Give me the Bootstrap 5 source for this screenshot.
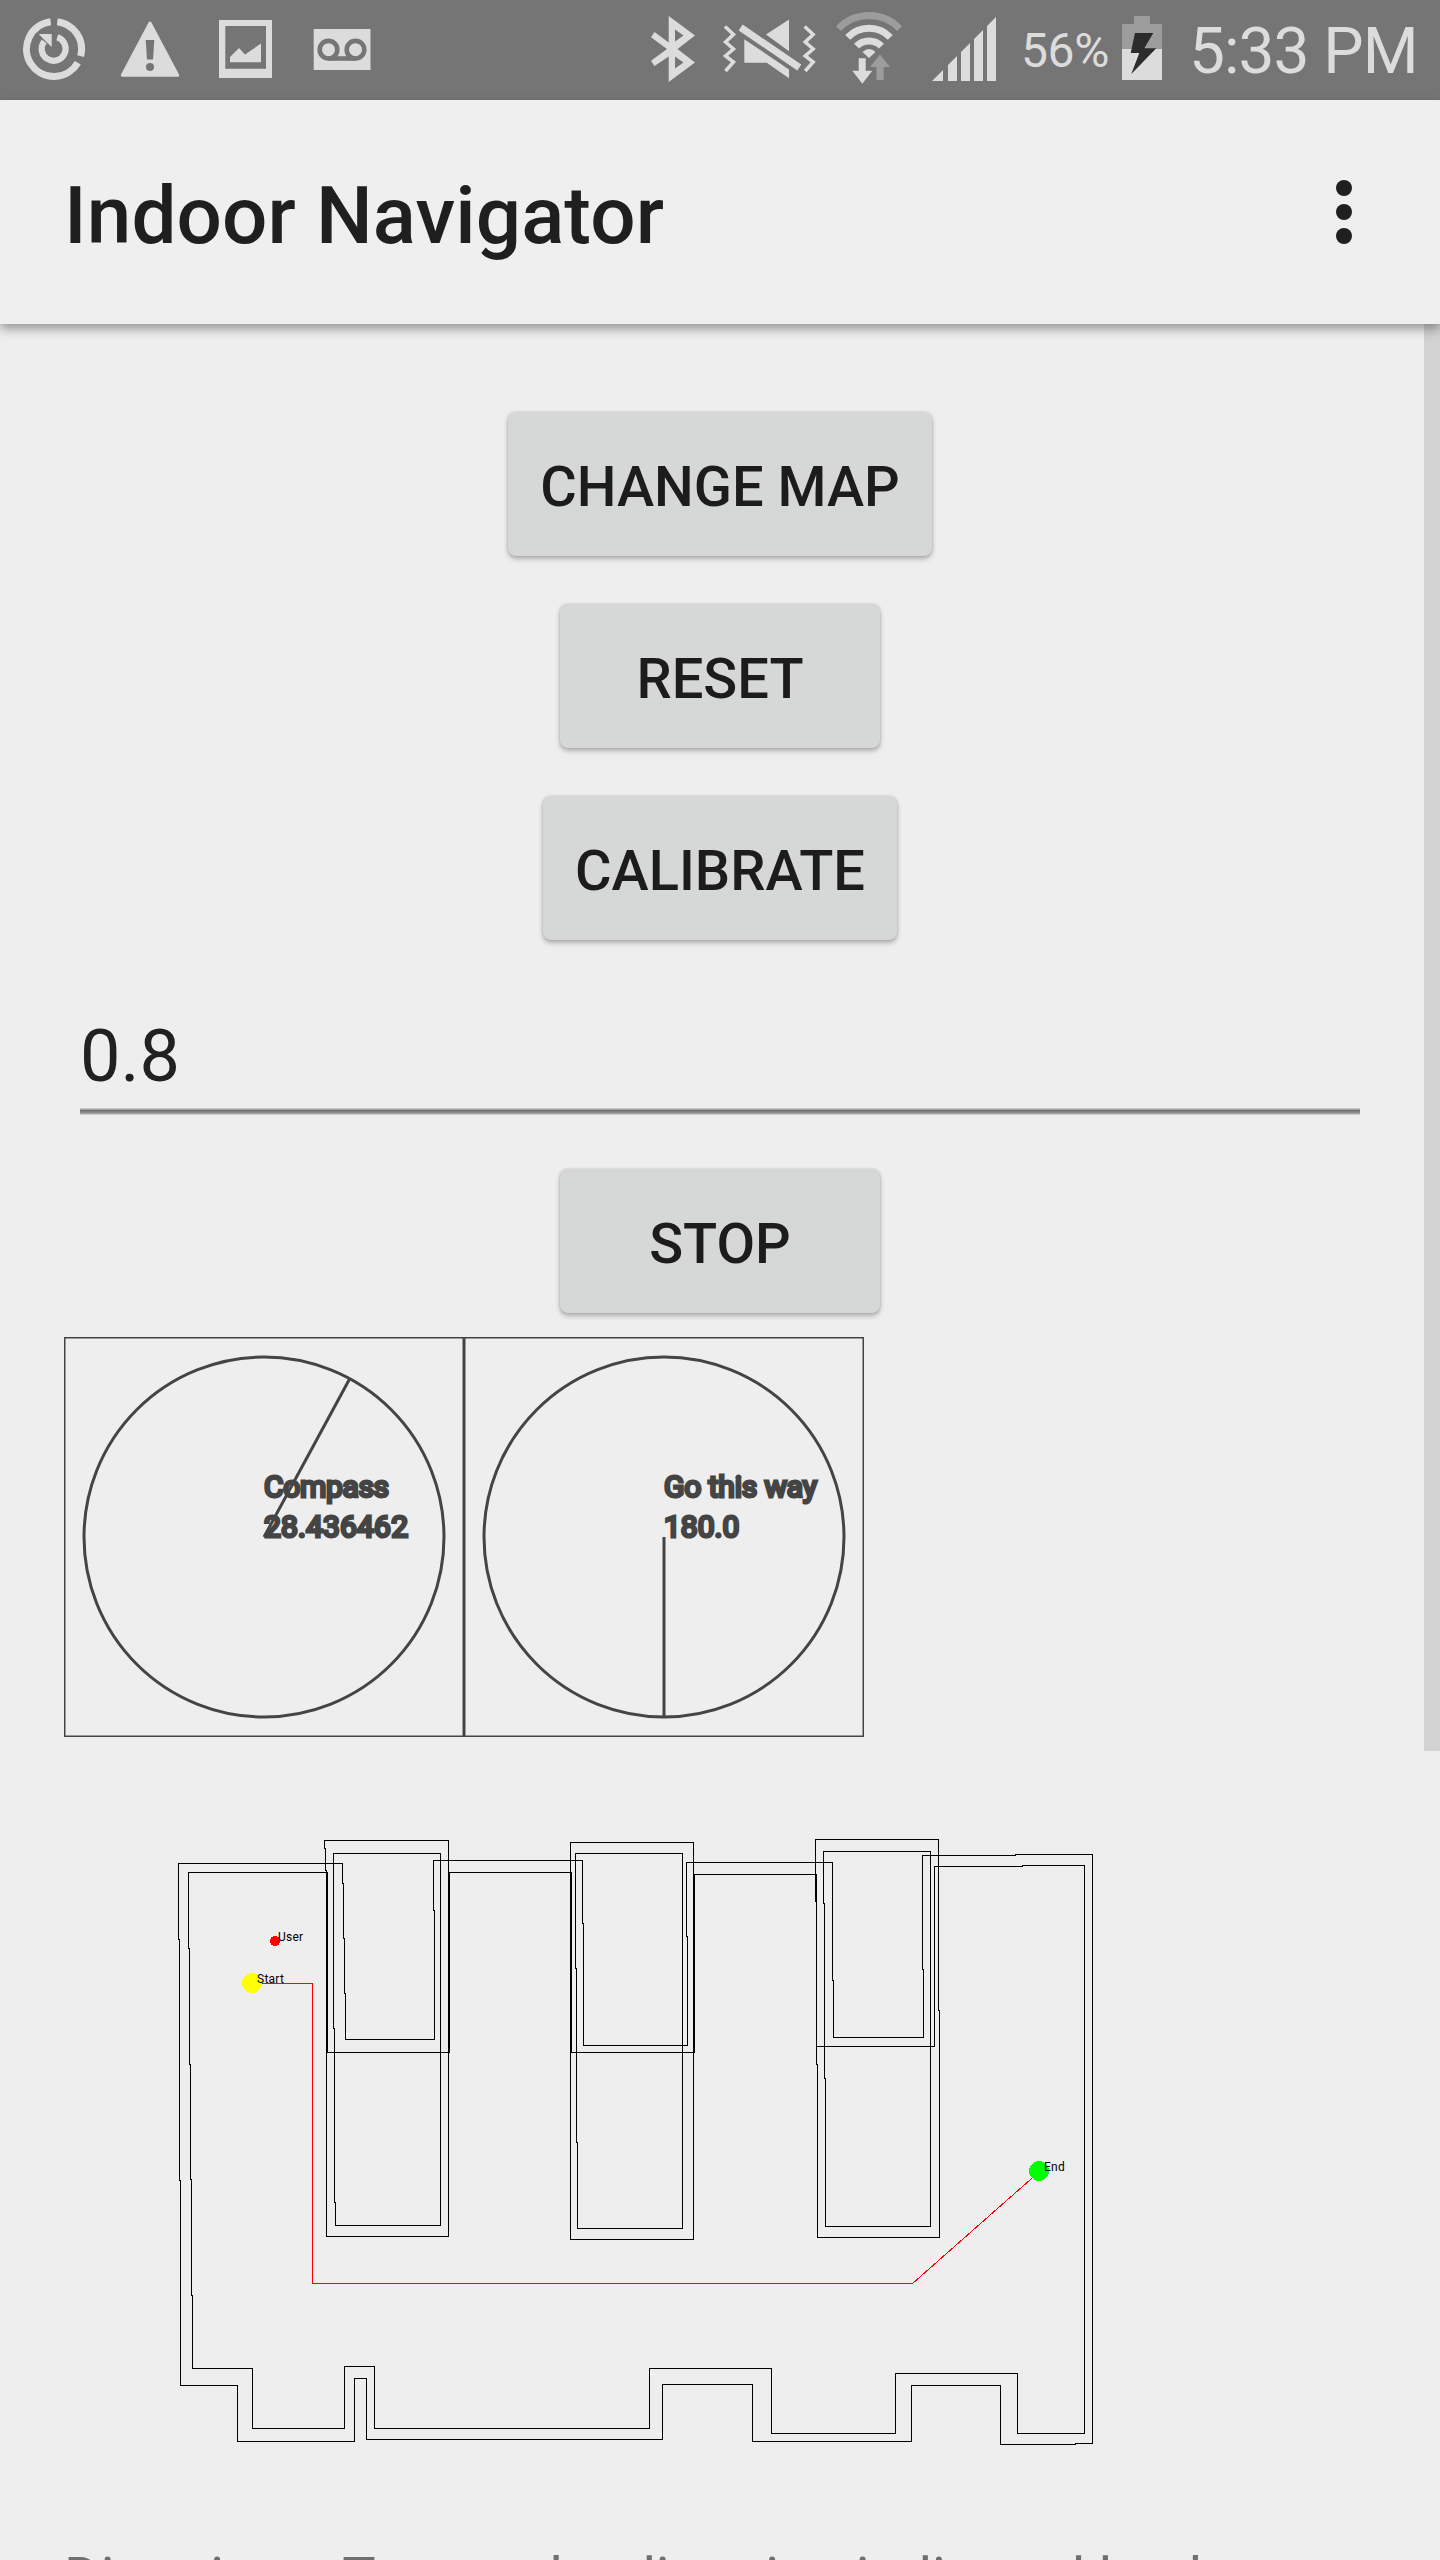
<!DOCTYPE html>
<html lang="en">
<head>
<meta charset="utf-8">
<meta name="viewport" content="width=device-width, initial-scale=1">
<title>Indoor Navigator</title>
<link href="https://cdn.jsdelivr.net/npm/bootstrap@5.3.0/dist/css/bootstrap.min.css" rel="stylesheet">
<style>
  body { font-family: Roboto, "Noto Sans", sans-serif; background: #eee; color: #1f1f1f; }
  .screen { width: 1440px; height: 2560px; }
  .status { height: 100px; background: #757575; color: #dcdcdc; fill: #dcdcdc; }
  .status svg { flex: none; height: 100px; }
  .pct { font-size: 48px; line-height: 100px; width: 98px; padding-top: 1px; letter-spacing: -.4px; }
  .clock { font-size: 64px; line-height: 100px; width: 226px; padding-top: 2px; letter-spacing: -1px; }
  .appbar { height: 224px; background: #efefef; padding: 9px 88px 0 64px; box-shadow: 0 5px 10px rgba(0,0,0,.36); z-index: 2; }
  .app-title { font-size: 80px; font-weight: 500; line-height: 1.17; letter-spacing: .1px; }
  .overflow-btn { margin-top: -9px; line-height: 0; }
  .content { height: 2236px; padding: 88px 64px 0; }
  .btn-map { --bs-btn-bg: #d6d8d7; --bs-btn-color: #1c1c1c; --bs-btn-font-weight: 500; --bs-btn-font-size: 56px; --bs-btn-line-height: 66px;
    --bs-btn-border-radius: 8px; --bs-btn-border-width: 0; --bs-btn-padding-x: 32px; --bs-btn-padding-y: 0;
    height: 144px; min-width: 320px; padding-top: 6px; box-shadow: 0 3px 5px rgba(0,0,0,.26), 0 0 3px rgba(0,0,0,.14); }
  .actions { gap: 48px; }
  .step-field { margin: 68px 16px 54px; }
  .step-field .form-control { height: 97px; font-size: 72px; line-height: 97px; color: #212121; background: none; }
  .underline { height: 7px; margin-top: 3px; background: linear-gradient(#c6c6c6 0 1px, #a0a0a0 1px 2px, #727272 2px 3px, #808080 3px 4px, #8c8c8c 4px 5px, #a4a4a4 5px 6px, #cbcbcb 6px); }
  .dials { margin-top: 24px; }
  .dials svg { width: 400px; height: 400px; overflow: hidden; fill: none; stroke: #444; stroke-width: 3px; }
  .dials text { font-size: 30px; fill: #444; stroke-linejoin: miter; }
  .plan { width: 1312px; height: 808px; shape-rendering: crispEdges; }
  .plan text { font-size: 12px; fill: #000; letter-spacing: .25px; }
  .directions { font-size: 56px; line-height: 66px; color: #6f6f6f; white-space: nowrap; letter-spacing: .02px; }
  .scroll-thumb { top: 324px; right: 0; width: 16px; height: 1427px; background: #d2d2d2; z-index: 1; }
</style>
</head>
<body>
<div class="screen position-relative overflow-hidden">

  <header class="status d-flex align-items-start">
    <!-- sync -->
    <svg width="64" viewBox="22 0 64 100" style="margin-left:22px"><g fill="none" stroke="#dcdcdc"><path stroke-width="7" d="M57.3 21.7A27.5 27.5 0 0 1 80.6 56.1M77.8 62.8A27.5 27.5 0 1 1 50.7 21.7"/><path stroke-width="6.2" d="M57.3 37.3A12 12 0 1 1 44.2 41.3"/></g><path d="M38.7 34H51.7V47L47.5 43L43 38.5Z"/></svg>
    <!-- warning -->
    <svg width="62" viewBox="119 0 62 100" style="margin-left:33px"><path stroke="#dcdcdc" stroke-width="3" stroke-linejoin="round" d="M150 23L122.3 75.2H177.7Z"/><path fill="#757575" d="M145.7 40H154.3L153 59.5H147Z"/><circle cx="150" cy="67" r="4" fill="#757575"/></svg>
    <!-- picture -->
    <svg width="55" viewBox="218 0 55 100" style="margin-left:37px"><path fill-rule="evenodd" d="M219 20H272V78H219ZM225.3 26V68.7H266V26ZM230 57L239 48L245 54.5L261 43.5V62.3H230Z"/></svg>
    <!-- voicemail -->
    <svg width="58" viewBox="313 0 58 100" style="margin-left:40px"><path d="M313.7 29H370.5V70H313.7Z"/><g fill="none" stroke="#757575" stroke-width="4.6"><circle cx="328.5" cy="49.7" r="8.8"/><circle cx="355.5" cy="49.7" r="8.8"/><path d="M328.5 58.5H355.5"/></g></svg>
    <!-- bluetooth -->
    <svg width="46" viewBox="650 0 46 100" style="margin-left:279px"><path fill-rule="evenodd" d="M668.7 16L695 35.5L677.5 49L695 62.5L668.7 82V56.5L654.5 66L651 60.7L667 49L651 37.3L654.5 32L668.7 42.5ZM675 29.5V41.5L683.5 35.5ZM675 56.5V68.5L683.5 62.5Z"/></svg>
    <!-- vibrate, muted -->
    <svg width="94" viewBox="722 0 94 100" style="margin-left:26px"><g fill="none" stroke="#dcdcdc"><path stroke-width="3.5" d="M725 26.5L733.5 34.5L725.5 42L733.5 49L725.5 56L733.5 62L725.5 71M804.7 26.5L813.2 34.5L805.2 42L813.2 49L805.2 56L813.2 62L805.2 71"/><path stroke-width="7" d="M740.7 27.5L799.3 67.5"/></g><path d="M766 34.5L789 19.5V51.3ZM744.3 39.3L789 69.5V78.3L766.7 62.7H744.3Z"/></svg>
    <!-- wifi with traffic arrows -->
    <svg width="68" viewBox="835 0 68 100" style="margin-left:19px"><g fill="none" stroke="#dcdcdc" stroke-width="7"><path stroke="#9c9c9c" d="M838.5 28.6A42.3 42.3 0 0 1 899.5 28.6"/><path d="M847.7 37.4A29.5 29.5 0 0 1 890.3 37.4"/><path d="M856.5 46.1A17.6 17.6 0 0 1 881.5 46.1"/></g><path d="M869 58L862.5 52Q869 46 875.5 52ZM858.7 58.3H865.7V70.7H872.3L862.3 83.7L852.3 70.7H858.7Z"/><path fill="#9c9c9c" d="M880 54.5L890 67H883.7V80H876.5V67H870Z"/></svg>
    <!-- signal -->
    <svg width="66" viewBox="931 0 66 100" style="margin-left:28px"><path d="M932 81L943 70V81ZM948 81V65L957 56V81ZM961 81V52L970 43V81ZM974 81V39L983 30V81ZM987 81V26L996 17V81Z"/></svg>
    <div class="pct flex-shrink-0 text-nowrap" style="margin-left:24px">56%</div>
    <!-- battery -->
    <svg width="40" viewBox="1122 0 40 100" style="margin-left:3px"><path fill="#9c9c9c" d="M1134 16H1150V24H1162V49H1122V24H1134Z"/><path d="M1122 49H1162V80H1122Z"/><path fill="#2c2c2c" d="M1135 33H1153.3L1144.3 48.3H1156.3L1131.3 74L1139.3 53H1130.7Z"/></svg>
    <div class="clock flex-shrink-0 text-nowrap" style="margin-left:27px">5:33 PM</div>
  </header>

  <nav class="appbar position-relative d-flex align-items-center justify-content-between">
    <h1 class="app-title m-0">Indoor Navigator</h1>
    <button class="overflow-btn border-0 bg-transparent p-0" aria-label="More options"><svg width="16" height="64" fill="#1f1f1f"><circle cx="8" cy="8" r="8"/><circle cx="8" cy="32" r="8"/><circle cx="8" cy="56" r="8"/></svg></button>
  </nav>
  <div class="scroll-thumb position-absolute"></div>

  <main class="content">
    <div class="actions d-flex flex-column align-items-center">
      <button class="btn btn-map">CHANGE MAP</button>
      <button class="btn btn-map">RESET</button>
      <button class="btn btn-map">CALIBRATE</button>
    </div>
    <div class="step-field">
      <input class="form-control border-0 rounded-0 p-0" type="text" value="0.8" aria-label="Step length">
      <div class="underline"></div>
    </div>
    <div class="d-flex justify-content-center"><button class="btn btn-map">STOP</button></div>

    <div class="dials d-flex">
      <svg viewBox="0 0 400 400"><rect width="400" height="400"/><circle cx="200" cy="200" r="180"/><path d="M200 200L285.7 41.7"/><text x="200" y="160" textLength="125">Compass</text><text x="200" y="200" textLength="144">28.436462</text></svg>
      <svg viewBox="0 0 400 400"><rect width="400" height="400"/><circle cx="200" cy="200" r="180"/><path d="M200 200V380"/><text x="200" y="160" textLength="153">Go this way</text><text x="200" y="200">180.0</text></svg>
    </div>

    <svg class="plan d-block" viewBox="64 1737 1312 808">
      <g transform="translate(.5 .5)" fill="none" stroke="#000" stroke-width="1">
        <!-- building walls, outer and inner face -->
        <path d="M178 1863V1939H179V2180H180V2385H237V2441H354V2378H366V2439H662V2384H752V2441H911V2385H1000V2444H1075V2443H1092V1854H1015V1855H922V1969H923V2037H833V1980H832V1862H686V1936H687V2045H583V1923H582V1860H433V1910H434V2039H345V1993H344V1938H343V1883H342V1863Z"/>
        <path d="M188 1872V1948H189V2064H190V2179H191V2295H192V2368H252V2428H344V2366H374V2428H649V2368H771V2433H895V2373H1017V2433H1084V1865H1022V1866H934V2046H816V1874H694V2052H571V1872H449V2052H327V1872Z"/>
        <!-- rooms -->
        <path d="M324 1840V1848H325V1870H326V2236H448V1840ZM333 1853V2028H334V2202H335V2225H440V1853Z"/>
        <path d="M569 1842H693V2239H570V1842M575 1853V1968H576V2142H577V2228H682V1853Z"/>
        <path d="M815 1839V1901H816V2064H817V2237H939V2010H938V1839ZM823 1851V1903H824V2078H825V2226H930V1851Z"/>
        <path stroke="#f00" d="M252 1983H312V2283H912L1039 2171"/>
      </g>
      <circle cx="275" cy="1941" r="5" fill="#f00"/>
      <circle cx="252" cy="1983" r="10" fill="#ff0"/>
      <circle cx="1039" cy="2171" r="10" fill="#0f0"/>
      <text x="278" y="1941">User</text>
      <text x="257" y="1983">Start</text>
      <text x="1044" y="2171">End</text>
    </svg>

    <p class="directions m-0">Directions: Turn to the direction indicated by the</p>
  </main>
</div>
<script src="https://cdn.jsdelivr.net/npm/bootstrap@5.3.0/dist/js/bootstrap.bundle.min.js"></script>
</body>
</html>
